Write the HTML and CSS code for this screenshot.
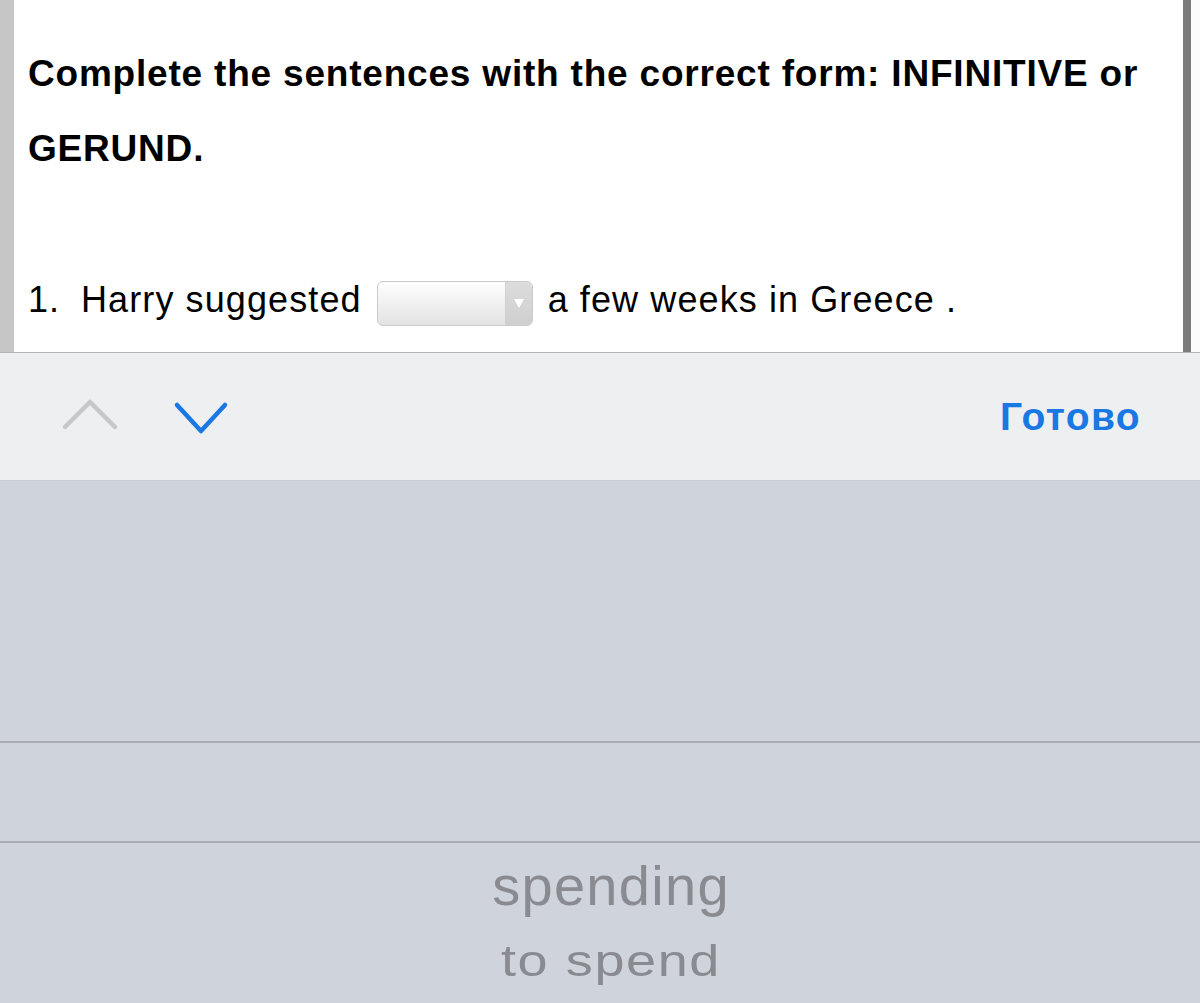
FILE: index.html
```html
<!DOCTYPE html>
<html lang="en">
<head>
<meta charset="utf-8">
<title>Infinitive or Gerund</title>
<link rel="stylesheet" href="styles.css">
</head>
<body>
<div class="page">
  <div class="doc">
    <div class="rail-left"></div>
    <div class="content">
      <h1 class="heading">Complete the sentences with the correct form: INFINITIVE or GERUND.</h1>
      <div class="sentence">
        <span class="num">1.</span>
        <span class="words">Harry suggested</span>
        <span class="select"><span class="select-field"></span><span class="select-arrow"><svg width="10" height="9" viewBox="0 0 10 9"><path d="M0 0 H10 L5 9 Z" fill="#ffffff"/></svg></span></span>
        <span class="words">a few weeks in Greece .</span>
      </div>
    </div>
    <div class="rail-right"></div>
    <div class="edge"></div>
  </div>
  <div class="toolbar">
    <svg class="chev chev-up" width="60" height="36" viewBox="0 0 60 36"><path d="M4 30 L29 5 L54 30" fill="none" stroke="#c7c7c9" stroke-width="4.5" stroke-linecap="round" stroke-linejoin="round"/></svg>
    <svg class="chev chev-down" width="60" height="36" viewBox="0 0 60 36"><path d="M5 5 L29 31 L53 5" fill="none" stroke="#1a78e4" stroke-width="4.5" stroke-linecap="round" stroke-linejoin="round"/></svg>
    <span class="done">Готово</span>
  </div>
  <div class="picker">
    <div class="picker-top"></div>
    <div class="picker-line"></div>
    <div class="picker-band"></div>
    <div class="picker-line"></div>
    <div class="picker-items">
      <div class="item item-1">spending</div>
      <div class="item item-2">to spend</div>
    </div>
  </div>
</div>
</body>
</html>
```
FILE: styles.css
```css
html, body {
  margin: 0;
  padding: 0;
  background: #ffffff;
}
body {
  font-family: "Liberation Sans", Arial, sans-serif;
  overflow: hidden;
}
.page {
  width: 1200px;
  height: 1003px;
  display: flex;
  flex-direction: column;
}
.doc {
  height: 352px;
  display: flex;
  border-bottom: 1px solid #b6b6b6;
  flex-shrink: 0;
}
.rail-left {
  width: 14px;
  background: #c6c6c6;
}
.content {
  flex: 1;
  background: #ffffff;
  padding: 36px 0 0 14px;
  color: #000;
}
.rail-right {
  width: 8px;
  background: #7b7b7b;
}
.edge {
  width: 9px;
  background: #fbfbfb;
}
.heading {
  margin: 0;
  font-size: 37px;
  font-weight: bold;
  line-height: 75px;
  letter-spacing: 0.8px;
  width: 1140px;
}
.sentence {
  margin-top: 89px;
  height: 50px;
  display: flex;
  align-items: center;
  font-size: 36px;
  line-height: 50px;
  letter-spacing: 1.1px;
}
.num {
  width: 53px;
}
.select {
  margin: 0 15px;
  width: 156px;
  height: 45px;
  box-sizing: border-box;
  border: 1px solid #cbcbcb;
  border-radius: 6px;
  display: flex;
  overflow: hidden;
  background: linear-gradient(#fefefe, #e3e3e3);
  margin-top: 6px;
}
.select-field {
  flex: 1;
}
.select-arrow {
  width: 26px;
  border-left: 1px solid #d2d2d2;
  background: linear-gradient(#dcdcdc, #cfcfcf);
  display: flex;
  align-items: center;
  justify-content: center;
}
.toolbar {
  height: 127px;
  flex-shrink: 0;
  background: #eeeff1;
  display: flex;
  align-items: center;
  padding: 0 60px 0 61px;
}
.chev-up {
  margin-top: -3px;
}
.chev-down {
  margin-left: 51px;
  margin-top: 3px;
}
.done {
  margin-left: auto;
  font-size: 39px;
  font-weight: bold;
  color: #1a78e4;
  letter-spacing: 1.4px;
  margin-right: -1px;
}
.picker {
  flex: 1;
  background: #cfd3db;
  display: flex;
  flex-direction: column;
  border-top: 1px solid #c8ccd3;
}
.picker-top {
  height: 260px;
}
.picker-line {
  height: 2px;
  background: #a9acb3;
}
.picker-band {
  height: 98px;
}
.picker-items {
  display: flex;
  flex-direction: column;
  align-items: center;
  padding-left: 22px;
  color: #8a8b90;
}
.item {
  white-space: nowrap;
}
.item-1 {
  font-size: 56px;
  line-height: 64px;
  margin-top: 11px;
  letter-spacing: 1.3px;
}
.item-2 {
  font-size: 54px;
  line-height: 60px;
  margin-top: 12px;
  transform: scaleY(0.82);
  letter-spacing: 1.6px;
}
```
